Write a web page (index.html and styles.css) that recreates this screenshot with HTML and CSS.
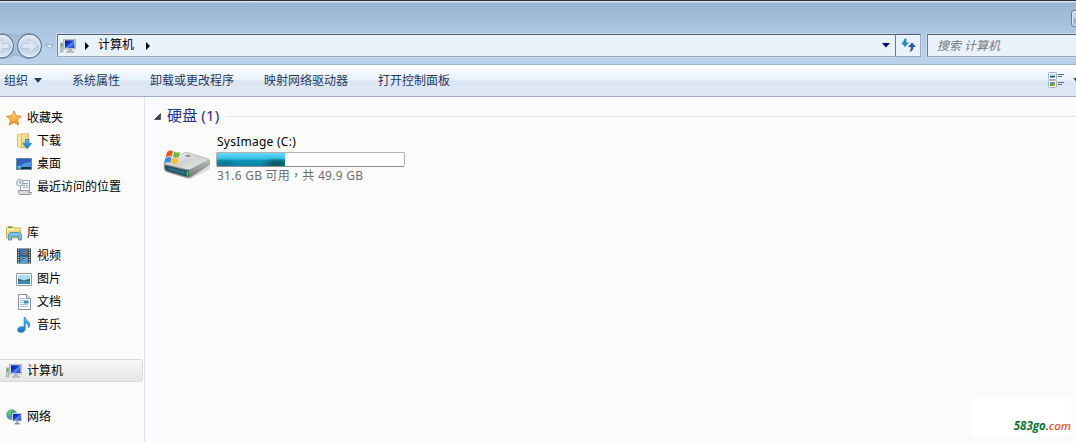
FILE: index.html
```
<!DOCTYPE html>
<html lang="zh-CN">
<head>
  <meta charset="UTF-8" />
  <meta name="viewport" content="width=device-width, initial-scale=1.0"/>
  <title>计算机</title>
  <link rel="stylesheet" href="styles.css">
</head>
<body>

  <!-- Shared icons and gradients -->
  <svg class="defs" width="0" height="0">
    <defs>
      <linearGradient id="screen" x1="0" y1="0" x2="1" y2="1">
        <stop offset="0" stop-color="#0818a0"/><stop offset="0.45" stop-color="#1238d8"/><stop offset="0.55" stop-color="#5c8cf4"/><stop offset="1" stop-color="#1530b8"/>
      </linearGradient>
      <linearGradient id="folder" x1="0" y1="0" x2="1" y2="1">
        <stop offset="0" stop-color="#fdf0b0"/><stop offset="1" stop-color="#e2bb50"/>
      </linearGradient>
      <linearGradient id="blue" x1="0" y1="0" x2="0" y2="1">
        <stop offset="0" stop-color="#55c0f4"/><stop offset="1" stop-color="#1672c4"/>
      </linearGradient>
      <linearGradient id="star" x1="0" y1="0" x2="0" y2="1">
        <stop offset="0" stop-color="#ffe48a"/><stop offset="1" stop-color="#f58a1c"/>
      </linearGradient>
      <linearGradient id="orb" x1="0" y1="0" x2="0" y2="1">
        <stop offset="0" stop-color="#dde8f4"/><stop offset="0.48" stop-color="#cbdaea"/><stop offset="0.52" stop-color="#b4c9e1"/><stop offset="1" stop-color="#dcebf8"/>
      </linearGradient>
      <symbol id="pc" viewBox="0 0 16 16">
        <rect x="0.5" y="5" width="2.4" height="9" fill="#c4c8c8" stroke="#93989a" stroke-width="0.6"/>
        <rect x="1.1" y="5.6" width="1.2" height="3" fill="#3fb531"/>
        <rect x="3.5" y="1.5" width="12" height="9.4" fill="#d4d6d8" stroke="#b4b7ba"/>
        <rect x="5" y="2.4" width="9.4" height="7.6" fill="url(#screen)"/>
        <path d="M8 11h4v2h2v1.8H6V13h2z" fill="#b4b8bc"/>
      </symbol>
    </defs>
  </svg>

  <!-- Title and address bar -->
  <div class="header">
    <div class="nav-buttons">
      <svg width="57" height="30" viewBox="0 0 57 30">
        <path d="M0 3.500C8 3.500 10 5.500 16 5.500S22 3.500 29 3.500A12.500 12.500 0 0 1 29 28.500C22 28.500 20 25 16 25S10 28.500 0 28.500z" fill="#a6bedb" stroke="#93adca"/>
        <circle cx="1.500" cy="16" r="11.800" fill="url(#orb)" stroke="#64788c" stroke-width="1.200"/>
        <circle cx="1.500" cy="16" r="10.600" fill="none" stroke="#e6f0f9"/>
        <circle cx="29.500" cy="16" r="11.800" fill="url(#orb)" stroke="#64788c" stroke-width="1.200"/>
        <circle cx="29.500" cy="16" r="10.600" fill="none" stroke="#e6f0f9"/>
        <path d="M9 13.500H2V9l-8 7 8 7v-4.500h7zM22 13.500h7V9l8.500 7-8.500 7v-4.500h-7z" fill="#dde7f2" stroke="#b2c6dc" stroke-width="0.800"/>
        <path d="M45.500 14.500h8L49.500 18.500z" fill="#dfeaf6" stroke="#8fa6c2" stroke-width="0.900"/>
      </svg>
    </div>
    <div class="address">
      <svg class="pc-icon" width="16" height="16"><use href="#pc"/></svg>
      <svg class="crumb-arrow" width="4" height="8"><path d="M0 0l4 4-4 4z"/></svg>
      <span class="crumb">计算机</span>
      <svg class="crumb-arrow" width="4" height="8"><path d="M0 0l4 4-4 4z"/></svg>
      <svg class="drop" width="8" height="5"><path d="M0 0h8L4 4.500z" fill="#00006e"/></svg>
    </div>
    <div class="refresh">
      <svg width="16" height="14" viewBox="0 0 16 14">
        <path d="M5.500 0C2.800 1 2.200 2.500 2.300 4.500H0L4 9l4-4.500H5.300C5.200 2.800 5.400 1.500 5.500 0z" fill="#2489c9"/>
        <path d="M8.500 14c3-.8 4-3 4-5H15l-4-4.500L7 9h2.800c0 2-.3 3.500-1.300 5z" fill="#2459a6"/>
      </svg>
    </div>
    <div class="search">搜索 计算机</div>
    <div class="window-btn"></div>
  </div>

  <!-- Command bar -->
  <div class="toolbar">
    <span class="tool organize">组织 <svg width="8" height="5"><path d="M0 0h8L4 4.800z" fill="#1e395b"/></svg></span>
    <span class="tool">系统属性</span>
    <span class="tool">卸载或更改程序</span>
    <span class="tool">映射网络驱动器</span>
    <span class="tool">打开控制面板</span>
    <svg class="view-icon" width="28" height="17" viewBox="0 0 28 17">
      <rect x="0.500" y="0.500" width="8" height="7" rx="1" fill="#fff" stroke="#a0aebc"/>
      <path d="M2 2h5v2H2z" fill="#a4d9ee"/><path d="M2 4h5v1.500H2z" fill="#194c67"/>
      <rect x="0.500" y="8.500" width="8" height="7" rx="1" fill="#fff" stroke="#a0aebc"/>
      <path d="M2 10h3v2H2z" fill="#5b8fd0"/><path d="M5 10h2v2H5z" fill="#d66b37"/><path d="M2 12h3v2H2z" fill="#48a03d"/><path d="M5 12h2v2H5z" fill="#c6a62b"/>
      <path d="M10 2.500h6M10 4.500h4M10 10.500h6M10 12.500h4" stroke="#596b80"/>
      <path d="M25.500 6h5L28 9.500z" fill="#1e395b"/>
    </svg>
  </div>

  <div class="main">
    <!-- Navigation pane -->
    <div class="sidebar">
      <div class="item">
        <svg width="16" height="16"><path d="M8 .8l2.200 4.900 5.200.6-3.900 3.500 1.100 5.200L8 12.400l-4.600 2.600 1.100-5.200L.6 6.300l5.200-.6z" fill="url(#star)" stroke="#d48427" stroke-width="0.900"/></svg>
        收藏夹
      </div>
      <div class="item sub">
        <svg width="16" height="16"><path d="M1.500 1.500h4v13l-4-1z" fill="#f9e9a2" stroke="#d2ad50" stroke-width="0.800"/><path d="M5.500.8h7v14h-7z" fill="url(#folder)" stroke="#d2ad50" stroke-width="0.800"/><path d="M9.500 6.500h3.500v4h2.600L11.200 15.500 6.900 10.500h2.600z" fill="url(#blue)" stroke="#2471a8" stroke-width="0.700"/></svg>
        下载
      </div>
      <div class="item sub">
        <svg width="16" height="16"><rect x="0.500" y="2.500" width="15" height="11" fill="#2f6fc9" stroke="#7088a0"/><path d="M1 3h14v3C9 6 5 8 1 11z" fill="#2b62c0"/><path d="M3 11c4-4 8-5 12-5v5z" fill="#4f95dc"/><rect x="1" y="11" width="14" height="2" fill="#1d2f45"/><circle cx="3.200" cy="11.300" r="1.900" fill="#45b7d6"/><path d="M3 10h1v1H3z" fill="#f1c34d"/></svg>
        桌面
      </div>
      <div class="item sub">
        <svg width="16" height="16"><path d="M4.500 1.500h9v11h-9z" fill="#f5f8fa" stroke="#9aa3aa"/><path d="M7 4.500h5M7 6.500h2M10 6.500h2M7 8.500h2M10 8.500h2" stroke="#67a5cb"/><path d="M2.500 11.500h10v2h3c0 1.500-.6 2-1.500 2H4c-1 0-1.500-.7-1.500-4z" fill="#d8dcdf" stroke="#92989e"/><circle cx="3.800" cy="3.800" r="3.200" fill="#f4f6f8" stroke="#929ba3"/><path d="M3.800 2v2h1.700" fill="none" stroke="#59646f" stroke-width="0.800"/></svg>
        最近访问的位置
      </div>
      <div class="item group">
        <svg width="16" height="16"><path d="M.5 2.500l1-1h5l1 1.500h7v10H.5z" fill="url(#folder)" stroke="#d2ac4a"/><path d="M2 2.500h4" stroke="#48ab3e"/><path d="M1 4.500h13.500" stroke="#fff5c6"/><path d="M2.500 15V9.500l1.500-2h8.500l3 2V15h-3v-3.500h-7V15z" fill="#78bfe9" stroke="#3d86bc" stroke-width="0.800"/></svg>
        库
      </div>
      <div class="item sub">
        <svg width="16" height="16"><rect x="1" y="0.500" width="14" height="15" fill="#303940"/><rect x="4" y="1" width="8" height="6.500" fill="#3776b5"/><rect x="4" y="8.500" width="8" height="6.500" fill="#46a1de"/><path d="M7 2l4 2-1 3-3-1zM4 12l4-3 1 1-3 3z" fill="#ae6045"/><path d="M2.500 1.500v14M13.500 1.500v14" stroke="#eef2f4" stroke-width="1.300" stroke-dasharray="1.200 1.200"/></svg>
        视频
      </div>
      <div class="item sub">
        <svg width="16" height="16"><rect x="0.500" y="2.500" width="15" height="12" rx="0.500" fill="#fff" stroke="#8e979f"/><rect x="2" y="4" width="12" height="9" fill="#a9dcf4"/><path d="M2 7.500l3 1 3 1 6-2v3H2z" fill="#386b66"/><path d="M2 10.500h12V13H2z" fill="#2889b8"/></svg>
        图片
      </div>
      <div class="item sub">
        <svg width="16" height="16"><path d="M2.500.5h8l4 4v11h-12z" fill="#fcfdfe" stroke="#858d96"/><path d="M10.500.5v4h4" fill="#dce4ec" stroke="#858d96"/><path d="M4 4.500h5M4 6.500h4M4 8.500h4M4 10.500h8M4 12.500h8" stroke="#a5bed2"/><rect x="8" y="6.500" width="4.500" height="3" fill="#318ac0"/></svg>
        文档
      </div>
      <div class="item sub">
        <svg width="16" height="16"><path d="M8 .5h1.400c0 3.500 4.600 3.500 4.500 7 0 1.500-.7 2.700-1.600 3.500.5-3-.9-4.500-3-5V12c0 2-1.800 3.400-4 3.400S1.500 14.300 1.500 12.900c0-1.800 2-3.300 4.300-3.300.8 0 1.500.2 2.200.5z" fill="url(#blue)" stroke="#2c7fbc" stroke-width="0.600"/></svg>
        音乐
      </div>
      <div class="item group selected">
        <svg width="16" height="16"><use href="#pc"/></svg>
        计算机
      </div>
      <div class="item group">
        <svg width="16" height="16"><circle cx="5.800" cy="5.700" r="5.400" fill="#3b93d7"/><path d="M3 1l4 0-2 3-1 3-3-1zM8 2l3 3-4 1zM2 8l4 1v2z" fill="#69c34d"/><rect x="6.500" y="4.500" width="9" height="7.500" fill="url(#screen)" stroke="#c7d0da"/><path d="M10 12.500h2.500V14H14v1.500H8.500V14H10z" fill="#8e9cad"/></svg>
        网络
      </div>
    </div>

    <!-- Drive list -->
    <div class="content">
      <div class="section">
        <svg width="7" height="7"><path d="M6.500.5v6h-6z" fill="#444" stroke="#222" stroke-width="0.600"/></svg>
        <span>硬盘 (1)</span>
        <div class="rule"></div>
      </div>
      <div class="drive">
        <svg class="drive-icon" width="48" height="30" viewBox="0 0 48 30">
          <defs>
            <linearGradient id="top" x1="0" y1="0" x2="1" y2="1"><stop offset="0" stop-color="#f8f8f8"/><stop offset="0.500" stop-color="#d0d2d2"/><stop offset="1" stop-color="#ececec"/></linearGradient>
            <linearGradient id="side" x1="0" y1="0" x2="0" y2="1"><stop offset="0" stop-color="#dadcdc"/><stop offset="1" stop-color="#707475"/></linearGradient>
          </defs>
          <path d="M2 18l24 10 21-12v3L27 29.500 3 22z" fill="#dcdcdc"/>
          <path d="M1 13.500L20 3.500Q23 2 26 3l19 6q2 1 1.500 3v3L28 27Q26 28.300 23 27.500L3 21.500Q1 20.500 1 18z" fill="url(#side)" stroke="#9a9e9f" stroke-width="0.700"/>
          <path d="M1.500 13.500L20 3.700Q23 2.500 26 3.300l19 6.200L28 18.800q-2 1-5 .2z" fill="url(#top)"/>
          <path d="M2 15l20 5q3 .7 4 0v6q-1 .7-4 0L4.500 21q-2-.7-2.500-3z" fill="#294d5b"/>
          <path d="M4 17l18 4.500v3L6 20z" fill="#2a7383"/>
          <path d="M23.500 21h1.800v4.500h-1.800z" fill="#42dd35"/>
          <ellipse cx="25" cy="5.800" rx="2.600" ry="1.100" fill="#878a8a"/>
          <path d="M4 2q3-2.300 6-.8L8.800 6.600Q6 5.500 2.500 7.300z" fill="#df5c2b"/>
          <path d="M11 1.700q3 1.500 6.200.2L15.700 7.300q-2.700 1-5.900-.3z" fill="#73b836"/>
          <path d="M2.300 8.200q3-2 6.200-.7L7.300 12.700q-3-1.200-6.300.7z" fill="#3c8cda"/>
          <path d="M9.600 8q3 1.500 5.900.3L14 13.500q-3 1-5.700-.4z" fill="#f8bf29"/>
        </svg>
        <div class="drive-info">
          <div class="drive-name">SysImage (C:)</div>
          <div class="usage"><div class="used" style="width: 36.6%"></div></div>
          <div class="free">31.6 GB 可用<span class="comma" lang="zh-TW">，</span>共 49.9 GB</div>
        </div>
      </div>
      <div class="watermark"><b>583go</b><i>.</i><span>com</span></div>
    </div>
  </div>

</body>
</html>
```
FILE: styles.css
```
* {
  box-sizing: border-box;
}

body {
  margin: 0;
  width: 1076px;
  height: 442px;
  overflow: hidden;
  font-family: "Noto Sans", "Noto Sans CJK SC", sans-serif;
  font-size: 12px;
  line-height: 16px;
  color: #000;
  background: #fbfbfb;
}

svg {
  display: block;
  flex: none;
}

.defs {
  position: absolute;
}

/* header */
.header {
  position: relative;
  display: flex;
  height: 64px;
  padding-top: 33px;
  border-top: 1px solid #2e2d38;
  background: linear-gradient(#d8e5f2 1px, #9ab4d2 2px, #a7c0dc 22px, #b9d1ea 50px, #b9d1ea);
}

.nav-buttons {
  width: 57px;
  margin-top: -4px;
}

.address,
.refresh,
.search {
  height: 23px;
  background: #e9f1f9;
  border: 1px solid #9aa9b9;
  border-top-color: #545f6b;
  box-shadow: 0 0 0 1px #c8dbef;
}

.address {
  display: flex;
  align-items: center;
  width: 839px;
  border-left-color: #6e7a87;
  border-right-color: #6e7a87;
}

.pc-icon {
  margin-left: 2px;
}

.crumb-arrow {
  margin-left: 9px;
}

.crumb {
  margin-left: 9px;
  margin-right: 3px;
  height: 18px;
}

.address .drop {
  margin-left: auto;
  margin-right: 5px;
}

.refresh {
  width: 25px;
  padding: 3px 0 0 5px;
  border-left: none;
  box-shadow: 1px 0 0 #c8dbef;
}

.search {
  flex: 1;
  margin-left: 6px;
  padding: 3px 0 0 9px;
  border-left-color: #6e7a87;
  border-right: none;
  font-style: italic;
  color: #74797e;
}

.window-btn {
  position: absolute;
  top: 9px;
  right: -10px;
  width: 15px;
  height: 17px;
  border: 1px solid #637a99;
  border-radius: 3px;
  background: linear-gradient(#c5d6e9 50%, #9eb8d5 50%);
  box-shadow: inset 0 0 0 1px #dce8f4;
}

/* toolbar */
.toolbar {
  display: flex;
  align-items: center;
  height: 33px;
  padding-left: 4px;
  border-top: 1px solid #a0b8d2;
  border-bottom: 1px solid #a0afc3;
  background: linear-gradient(#fff, #f7fbff 4px, #e7f1fb 15px, #dce6f4 16px, #dde7f5);
  color: #1e395b;
}

.tool {
  height: 16px;
  margin-right: 30px;
}

.organize {
  display: flex;
  gap: 6px;
}

.organize svg {
  margin-top: 5px;
}

.view-icon {
  margin-left: auto;
}

/* panes */
.main {
  display: flex;
  height: 345px;
}

.sidebar {
  width: 145px;
  padding-top: 9px;
  border-right: 1px solid #d6e5f5;
}

.item {
  display: flex;
  align-items: center;
  gap: 5px;
  height: 23px;
  padding-left: 6px;
}

.sub {
  padding-left: 16px;
}

.group {
  margin-top: 23px;
}

.selected {
  width: 143px;
  border: 1px solid #d9d9d9;
  border-left: none;
  border-radius: 0 3px 3px 0;
  background: linear-gradient(#f8f8f8, #e5e5e5);
}

.content {
  position: relative;
  flex: 1;
  padding: 9px 0 0 9px;
}

.section {
  display: flex;
  align-items: center;
  height: 20px;
  font-size: 15px;
  line-height: 20px;
  color: #1e3287;
}

.section span {
  margin: -2px 7px 0 6px;
  letter-spacing: 0.15px;
}

.rule {
  flex: 1;
  height: 1px;
  background: #e2e2e2;
}

.drive {
  display: flex;
  margin: 8px 0 0 9px;
}

.drive-icon {
  margin-top: 16px;
}

.drive-info {
  margin-left: 5px;
}

.drive-name {
  height: 18px;
  padding-left: 1px;
  letter-spacing: 0.25px;
}

.usage {
  width: 189px;
  height: 15px;
  border: 1px solid #b2b2b2;
  border-bottom-color: #8b8b8b;
  border-radius: 2px;
  background: #fff;
}

.used {
  height: 13px;
  background:
    radial-gradient(ellipse 12px 5px at 8px 11px, #08708c, transparent),
    radial-gradient(ellipse 16px 6px at 60px 11px, #0e5c68 30%, transparent),
    linear-gradient(#62daf6, #35bde2 45%, #0d94b8 55%, #0c86a8);
}

.free {
  height: 16px;
  margin-top: 1px;
  padding-left: 1px;
  letter-spacing: 0.25px;
  color: #6d6d6d;
}

.comma {
  font-family: "Noto Sans CJK TC", sans-serif;
  line-height: 1;
}

.watermark {
  position: absolute;
  right: 5px;
  bottom: 6px;
  width: 100px;
  height: 38px;
  padding-top: 20px;
  background: #fff;
  font-family: "Open Sans", sans-serif;
  font-size: 11.5px;
  font-style: italic;
  font-weight: 600;
  text-align: right;
}

.watermark b {
  font-weight: 700;
  color: #0c7431;
}

.watermark i {
  color: #222;
}

.watermark span {
  color: #e5502c;
}
```
